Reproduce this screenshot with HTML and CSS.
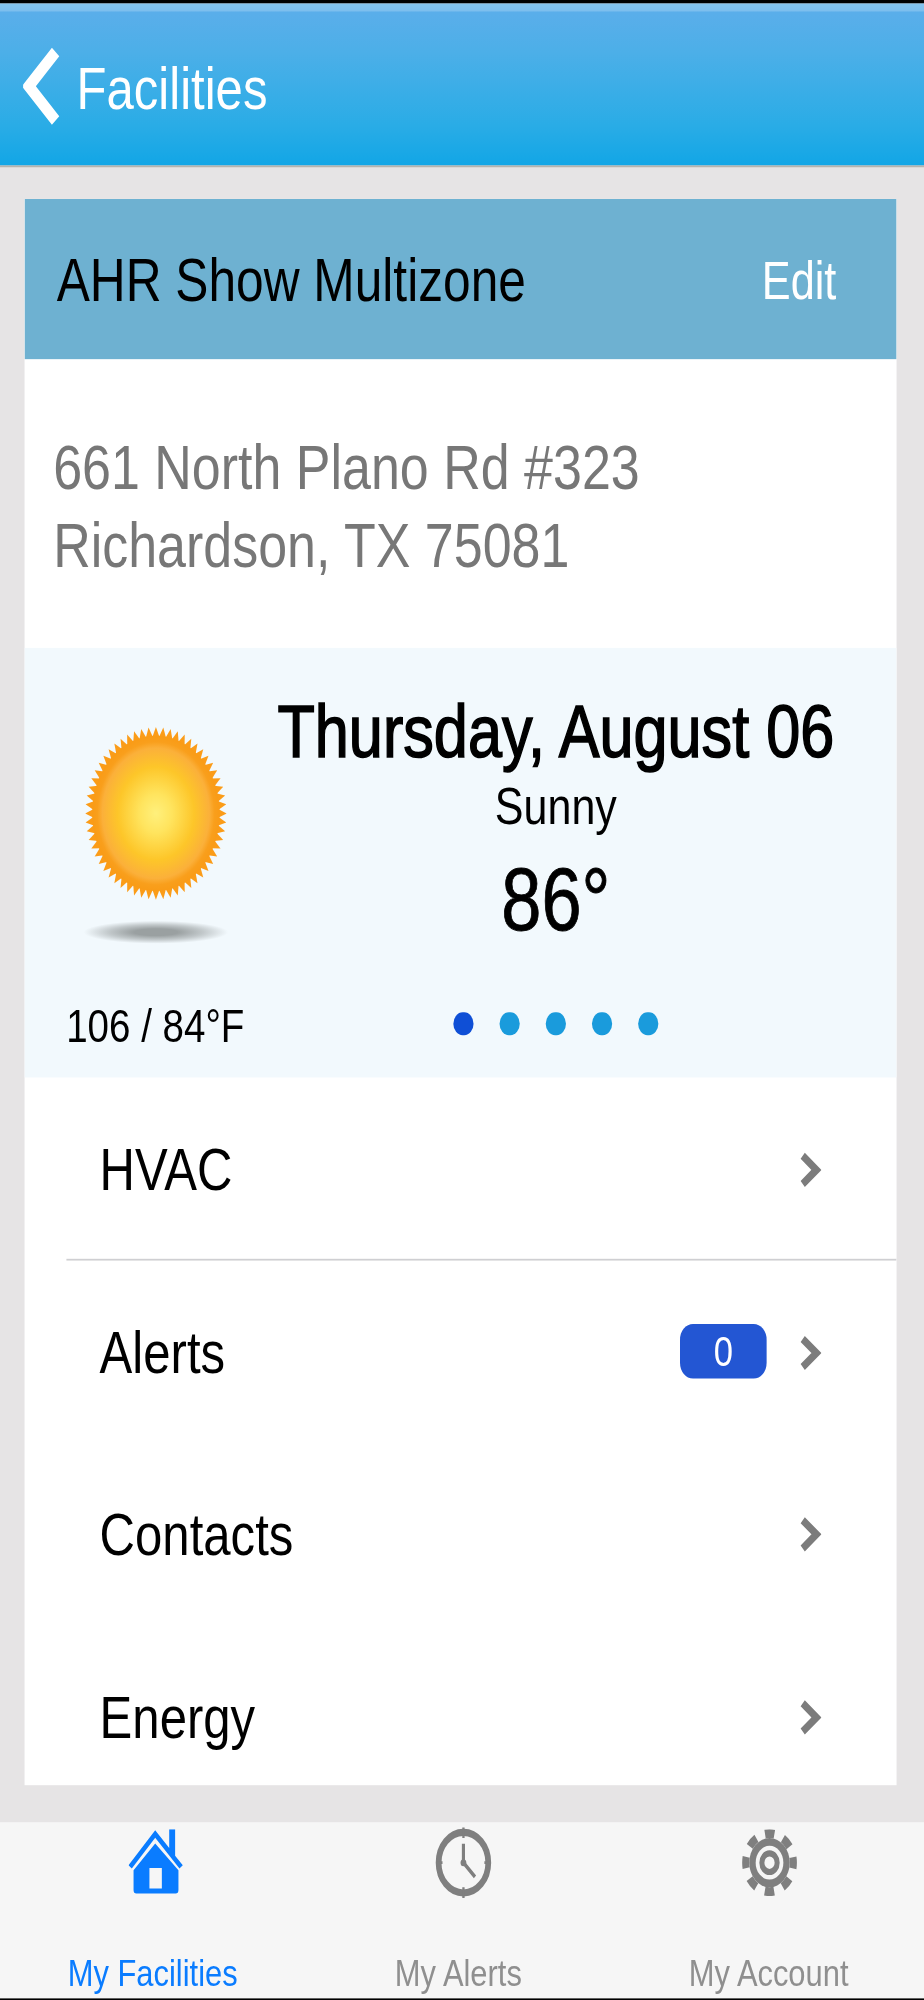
FILE: index.html
```html
<!DOCTYPE html>
<html lang="en">

<head>
    <meta charset="UTF-8">
    <meta name="viewport" content="width=device-width, initial-scale=1.0">
    <title>Facilities</title>
    <link rel="stylesheet" href="styles.css">
</head>

<body>
    <div class="stage">
        <div class="app">
            <header class="navbar">
                <svg class="back-icon" viewBox="0 0 26 44" aria-hidden="true">
                    <path d="M22.5 2.5 L4 22 L22.5 41.5" />
                </svg>
                <span class="navbar-title">Facilities</span>
            </header>

            <main class="content">
                <section class="card">
                    <div class="card-head">
                        <span class="card-title">AHR Show Multizone</span>
                        <span class="card-edit">Edit</span>
                    </div>

                    <div class="address">
                        <div>661 North Plano Rd #323</div>
                        <div>Richardson, TX 75081</div>
                    </div>

                    <div class="weather">
                        <div class="weather-left">
                            <svg class="sun" viewBox="0 0 100 100" aria-hidden="true">
                                <defs>
                                    <radialGradient id="sunFill" cx="50%" cy="50%" r="50%">
                                        <stop offset="0%" stop-color="#fff07c" />
                                        <stop offset="25%" stop-color="#ffe45e" />
                                        <stop offset="60%" stop-color="#fdc629" />
                                        <stop offset="84%" stop-color="#fbb03a" />
                                        <stop offset="92%" stop-color="#f99f1c" />
                                        <stop offset="100%" stop-color="#f99b16" />
                                    </radialGradient>
                                    <polygon id="ray" points="50,0 52.600,6 52.600,94 50,100 47.400,94 47.400,6" />
                                    <g id="rays">
                                        <use href="#ray" />
                                        <use href="#ray" transform="rotate(6 50 50)" />
                                        <use href="#ray" transform="rotate(12 50 50)" />
                                        <use href="#ray" transform="rotate(18 50 50)" />
                                        <use href="#ray" transform="rotate(24 50 50)" />
                                    </g>
                                </defs>
                                <g fill="#fb9c18">
                                    <use href="#rays" />
                                    <use href="#rays" transform="rotate(30 50 50)" />
                                    <use href="#rays" transform="rotate(60 50 50)" />
                                    <use href="#rays" transform="rotate(90 50 50)" />
                                    <use href="#rays" transform="rotate(120 50 50)" />
                                    <use href="#rays" transform="rotate(150 50 50)" />
                                </g>
                                <circle cx="50" cy="50" r="45" fill="url(#sunFill)" />
                            </svg>
                            <div class="sun-shadow"></div>
                            <div class="temp-range">106 / 84°F</div>
                        </div>
                        <div class="weather-right">
                            <div class="weather-date">Thursday, August 06</div>
                            <div class="weather-text">Sunny</div>
                            <div class="weather-temp">86°</div>
                            <div class="dots">
                                <span class="dot active"></span>
                                <span class="dot"></span>
                                <span class="dot"></span>
                                <span class="dot"></span>
                                <span class="dot"></span>
                            </div>
                        </div>
                    </div>

                    <ul class="menu">
                        <li class="menu-row divided">
                            <span class="menu-label">HVAC</span>
                            <svg class="chevron" viewBox="0 0 15 21" aria-hidden="true"><path d="M2 2.5 L11.5 10.5 L2 18.5" /></svg>
                        </li>
                        <li class="menu-row">
                            <span class="menu-label">Alerts</span>
                            <span class="badge">0</span>
                            <svg class="chevron" viewBox="0 0 15 21" aria-hidden="true"><path d="M2 2.5 L11.5 10.5 L2 18.5" /></svg>
                        </li>
                        <li class="menu-row">
                            <span class="menu-label">Contacts</span>
                            <svg class="chevron" viewBox="0 0 15 21" aria-hidden="true"><path d="M2 2.5 L11.5 10.5 L2 18.5" /></svg>
                        </li>
                        <li class="menu-row">
                            <span class="menu-label">Energy</span>
                            <svg class="chevron" viewBox="0 0 15 21" aria-hidden="true"><path d="M2 2.5 L11.5 10.5 L2 18.5" /></svg>
                        </li>
                    </ul>
                </section>
            </main>

            <nav class="tabbar">
                <div class="tab active">
                    <div class="tab-icon">
                        <svg class="home-icon" viewBox="0 0 38 38" aria-hidden="true">
                            <path d="M18.500 0.600 L28.200 10.700 V0 H32.300 V15 L37.600 20.500 L35.300 22.300 L18.500 4.900 L2.300 22.300 L0 20.500 Z" />
                            <path fill-rule="evenodd" d="M18.500 8.100 L34.600 23.300 V34.500 Q34.600 36.500 32.600 36.500 H5.500 Q3.500 36.500 3.500 34.500 V23.300 Z M14.500 22 V33.700 H23.100 V22 Z" />
                        </svg>
                    </div>
                    <span class="tab-label">My Facilities</span>
                </div>
                <div class="tab">
                    <div class="tab-icon">
                        <svg class="clock-icon" viewBox="0 0 40 42" aria-hidden="true">
                            <circle cx="20" cy="21" r="17.200" />
                            <path class="clock-ticks" d="M20 1 V7 M20 35 V41 M1 21 H5.500 M34.500 21 H39" />
                            <path class="clock-hands" d="M20 10.200 V21 L28 29.100" />
                            <circle class="clock-hub" cx="20" cy="21" r="2" />
                        </svg>
                    </div>
                    <span class="tab-label tab-label-alerts">My Alerts</span>
                </div>
                <div class="tab">
                    <div class="tab-icon">
                        <svg class="gear-icon" viewBox="0 0 38 38" aria-hidden="true">
                            <circle class="gear-teeth" cx="19" cy="19" r="16.500" />
                            <circle cx="19" cy="19" r="14" class="gear-body" />
                            <circle cx="19" cy="19" r="9.600" class="gear-cut" />
                            <circle cx="19" cy="19" r="5.300" class="gear-hub" />
                        </svg>
                    </div>
                    <span class="tab-label">My Account</span>
                </div>
            </nav>
        </div>
    </div>
</body>

</html>
```

FILE: styles.css
```css
/* the screen is laid out at 640x1136 and stretched to the 924x2000 window */
html,
body {
    margin: 0;
    padding: 0;
    background-color: #e6e4e5;
}

body {
    font-family: 'Liberation Sans', Arial, sans-serif;
}

.stage {
    width: 924px;
    height: 2000px;
    overflow: hidden;
}

.app {
    width: 640px;
    height: 1136px;
    display: flex;
    flex-direction: column;
    background-color: #e6e4e5;
    border-top: 2.3px solid #000;
    border-bottom: 1.7px solid #000;
    box-sizing: border-box;
    transform: scale(1.44375, 1.76056);
    transform-origin: 0 0;
    filter: blur(0.35px);
}

.navbar {
    height: 92px;
    flex: none;
    display: flex;
    align-items: center;
    padding-left: 15.6px;
    color: white;
    background: linear-gradient(#84c4ee 0, #7dbfee 4px, #5aaeea 5px, #4cafe8 30%, #2aace6 75%, #12a6e6 100%);
    border-bottom: 1.2px solid #b5b3ae;
}

.back-icon {
    width: 26px;
    height: 44px;
    flex: none;
    margin-top: 2px;
    fill: none;
    stroke: white;
    stroke-width: 7;
}

.navbar-title {
    margin-left: 11.4px;
    padding-top: 4.4px;
    font-size: 34px;
}

.content {
    flex: 1;
    min-height: 0;
    padding: 18px 18.7px 0 17.3px;
}

.card {
    height: 901px;
    background: white;
    overflow: hidden;
}

.card-head {
    height: 90.9px;
    display: flex;
    align-items: center;
    justify-content: space-between;
    padding: 3px 42px 0 22px;
    background-color: #6eb1d1;
    box-sizing: border-box;
}

.card-title {
    font-size: 34.4px;
    color: #000;
}

.card-edit {
    font-size: 30px;
    color: white;
}

.address {
    height: 164.1px;
    display: flex;
    flex-direction: column;
    justify-content: center;
    padding: 3.4px 0 0 19.5px;
    font-size: 36px;
    line-height: 44px;
    color: #777;
    box-sizing: border-box;
}

.weather {
    height: 243.7px;
    display: flex;
    background-color: #f2f9fd;
    color: #000;
}

.weather-left {
    width: 160px;
    margin-left: 11px;
    flex: none;
    display: flex;
    flex-direction: column;
    align-items: center;
    padding-top: 44.5px;
    box-sizing: border-box;
}

.sun {
    width: 98px;
    height: 100px;
    flex: none;
}

.sun-shadow {
    width: 100px;
    height: 13px;
    margin-top: 10.5px;
    background: radial-gradient(closest-side, #9aa0a1 30%, rgba(154, 160, 161, 0.55) 65%, rgba(154, 160, 161, 0) 100%);
}

.temp-range {
    margin-top: 31.700px;
    margin-right: 1.5px;
    font-size: 26.7px;
    line-height: 30px;
    white-space: nowrap;
}

.weather-right {
    flex: 1;
    margin-right: 39.6px;
    padding-top: 24.7px;
    text-align: center;
    white-space: nowrap;
}

.weather-date {
    font-size: 42.4px;
    -webkit-text-stroke: 0.9px #000;
    line-height: 46px;
}

.weather-text {
    margin-top: -0.7px;
    font-size: 29.8px;
    line-height: 40px;
}

.weather-temp {
    margin-top: 3.2px;
    font-size: 50px;
    -webkit-text-stroke: 0.5px #000;
    line-height: 60px;
}

.dots {
    display: flex;
    justify-content: center;
    gap: 18.5px;
    margin-top: 33.5px;
}

.dot {
    width: 13.5px;
    height: 13.6px;
    border-radius: 50%;
    background-color: #1a9bdc;
}

.dot.active {
    background-color: #0f4fd6;
}

.menu {
    margin: 0;
    padding: 0;
    list-style: none;
}

.menu-row {
    height: 103.4px;
    margin-left: 29px;
    padding: 2px 52.500px 0 22.700px;
    display: flex;
    align-items: center;
    box-sizing: border-box;
}

.menu-row.divided {
    height: 104px;
    border-bottom: 1.7px solid #cfcfd2;
}

.menu-label {
    flex: 1;
    font-size: 34px;
    color: #000;
}

.badge {
    width: 59.6px;
    height: 31px;
    margin-right: 23px;
    margin-bottom: 1.5px;
    border-radius: 9px;
    background-color: #2356d3;
    color: white;
    font-size: 24px;
    line-height: 31px;
    text-align: center;
}

.chevron {
    width: 15px;
    height: 21px;
    flex: none;
    fill: none;
    stroke: #7c7c7c;
    stroke-width: 4.5;
}

.tabbar {
    height: 100.5px;
    flex: none;
    display: grid;
    grid-template-columns: repeat(3, 1fr);
    background-color: #f6f6f6;
}

.tab {
    display: flex;
    flex-direction: column;
    align-items: center;
    padding-top: 1.8px;
    color: #8f8f8f;
}

.tab.active {
    color: #0a7cff;
}

.tab-icon {
    height: 44px;
    display: flex;
    align-items: center;
    justify-content: center;
}

.home-icon {
    width: 38px;
    height: 38px;
    margin-left: 2.6px;
    fill: #0a7cff;
}

.clock-icon {
    width: 40px;
    height: 42px;
    margin-left: 1.6px;
    fill: none;
    stroke: #7f7f7f;
    stroke-width: 4;
}

.clock-ticks {
    stroke-width: 1.600;
}

.clock-hands {
    stroke-width: 2.200;
}

.clock-hub {
    fill: #7f7f7f;
    stroke: none;
}

.gear-icon {
    width: 38px;
    height: 38px;
    fill: none;
}

.gear-teeth {
    stroke: #7f7f7f;
    stroke-width: 5;
    stroke-dasharray: 6.500 6.460;
    stroke-dashoffset: 3.250;
}

.gear-body {
    fill: #7f7f7f;
}

.gear-cut {
    fill: #f6f6f6;
}

.gear-hub {
    stroke: #7f7f7f;
    stroke-width: 3.500;
}

.tab-label {
    margin-top: 27.5px;
    margin-right: 1.8px;
    font-size: 21.4px;
    line-height: 26px;
}

.tab-label-alerts {
    margin-right: 5px;
}
```
